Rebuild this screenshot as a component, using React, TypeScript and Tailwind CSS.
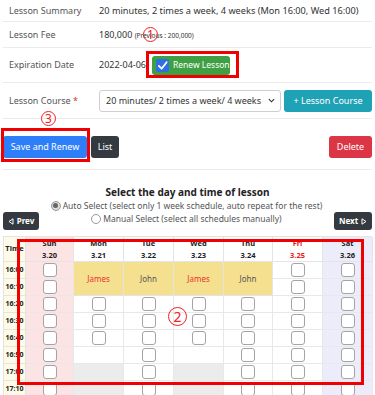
import React from "react";

type Cell =
  | { k: "cb" }
  | { k: "empty" }
  | { k: "grey" }
  | { k: "name"; name: string; red: boolean }
  | { k: "skip" };

const times = ["16:00", "16:10", "16:20", "16:30", "16:40", "16:50", "17:00", "17:10"];
const days = [
  { n: "Sun", d: "3.20", bg: "bg-[#fde4e4]", red: false },
  { n: "Mon", d: "3.21", bg: "bg-white", red: false },
  { n: "Tue", d: "3.22", bg: "bg-white", red: false },
  { n: "Wed", d: "3.23", bg: "bg-white", red: false },
  { n: "Thu", d: "3.24", bg: "bg-white", red: false },
  { n: "Fri", d: "3.25", bg: "bg-white", red: true },
  { n: "Sat", d: "3.26", bg: "bg-[#ececfb]", red: false },
];

const cb: Cell = { k: "cb" };
const em: Cell = { k: "empty" };
const gr: Cell = { k: "grey" };
const sk: Cell = { k: "skip" };
const all = (): Cell[] => times.map(() => cb);
const cols: Cell[][] = [
  all(),
  [{ k: "name", name: "James", red: true }, sk, cb, cb, cb, em, gr, gr],
  [{ k: "name", name: "John", red: false }, sk, cb, cb, cb, cb, cb, cb],
  [{ k: "name", name: "James", red: true }, sk, cb, cb, cb, em, gr, gr],
  [{ k: "name", name: "John", red: false }, sk, cb, cb, cb, cb, cb, cb],
  all(),
  all(),
];

function Box() {
  return <div className="w-[14px] h-[14px] rounded-[3px] border border-[#a4a4a4] bg-white" />;
}

function Circled({ n, cls }: { n: string; cls: string }) {
  return (
    <div
      className={`absolute rounded-full border border-[#f02020] text-[#f02020] flex items-center justify-center leading-none bg-transparent ${cls}`}
    >
      {n}
    </div>
  );
}

export default function App() {
  const gridCells: React.ReactNode[] = [];
  gridCells.push(
    <div key="th" className="bg-[#fdfbe8] border-r border-b border-[#e4e4e4] flex items-center justify-center font-bold text-[7.5px] text-[#222]" style={{ gridColumn: 1, gridRow: 1 }}>
      Time
    </div>
  );
  days.forEach((d, i) => {
    gridCells.push(
      <div
        key={"h" + i}
        className={`${d.bg} border-r border-b border-[#e4e4e4] flex flex-col items-center justify-center font-bold text-[7.5px] leading-[12px] ${d.red ? "text-[#f01818]" : "text-[#222]"}`}
        style={{ gridColumn: i + 2, gridRow: 1 }}
      >
        <span>{d.n}</span>
        <span>{d.d}</span>
      </div>
    );
  });
  times.forEach((t, r) => {
    gridCells.push(
      <div key={"t" + r} className="bg-[#fdfbe8] border-r border-b border-[#e4e4e4] flex items-center justify-center font-bold text-[7px] text-[#222]" style={{ gridColumn: 1, gridRow: r + 2 }}>
        {t}
      </div>
    );
    days.forEach((d, c) => {
      const cell = cols[c][r];
      if (cell.k === "skip") return;
      if (cell.k === "name") {
        gridCells.push(
          <div
            key={`c${c}-${r}`}
            className={`bg-[#f4e08f] border-r border-b border-[#e4e4e4] flex items-center justify-center text-[8px] ${cell.red ? "text-[#f03030]" : "text-[#555]"}`}
            style={{ gridColumn: c + 2, gridRow: `${r + 2} / span 2` }}
          >
            {cell.name}
          </div>
        );
        return;
      }
      const bg = cell.k === "grey" ? "bg-[#ececec]" : d.bg;
      gridCells.push(
        <div key={`c${c}-${r}`} className={`${bg} border-r border-b border-[#e8e8e8] flex items-center justify-center`} style={{ gridColumn: c + 2, gridRow: r + 2 }}>
          {cell.k === "cb" ? <Box /> : null}
        </div>
      );
    });
  });

  return (
    <div className="relative w-[375px] h-[395px] overflow-hidden bg-white font-['Noto_Sans',sans-serif] text-[9px] text-[#333]">
      <div className="px-[3px]">
        <div className="flex items-center h-[22px] border-b border-[#ebebeb]">
          <div className="w-[96px] pl-[6px] text-[#555]">Lesson Summary</div>
          <div className="text-[#333] text-[9.2px]">20 minutes, 2 times a week, 4 weeks (Mon 16:00, Wed 16:00)</div>
        </div>
        <div className="flex items-center h-[26px] border-b border-[#ebebeb]">
          <div className="w-[96px] pl-[6px] text-[#555]">Lesson Fee</div>
          <div className="text-[#333]">
            180,000 <span className="text-[6.5px]">(Previous : 200,000)</span>
          </div>
        </div>
        <div className="flex items-center h-[35px] border-b border-[#ebebeb]">
          <div className="w-[96px] pl-[6px] text-[#555]">Expiration Date</div>
          <div className="text-[#333]">2022-04-06</div>
          <div className="ml-[6px] w-[78px] h-[19px] rounded-[3px] bg-[#3e9f43] flex items-center pl-[4px] gap-[4px] text-white text-[8.5px]">
            <div className="w-[13px] h-[13px] rounded-[2px] bg-[#2f6fe4] flex items-center justify-center">
              <svg width="11" height="11" viewBox="0 0 12 12">
                <path d="M2 6.5 L5 9.5 L10.5 2.5" stroke="white" strokeWidth="2" fill="none" strokeLinecap="round" strokeLinejoin="round" />
              </svg>
            </div>
            <span>Renew Lesson</span>
          </div>
        </div>
        <div className="flex items-center h-[36px] border-b border-[#ebebeb]">
          <div className="w-[96px] pl-[6px] text-[#555]">
            Lesson Course <span className="text-[#e03030]">*</span>
          </div>
          <div className="w-[182px] h-[22px] border border-[#cfcfcf] rounded-[3px] flex items-center justify-between pl-[6px] pr-[5px] text-[9px] text-[#333]">
            <span>20 minutes/ 2 times a week/ 4 weeks</span>
            <svg width="7" height="5" viewBox="0 0 8 5">
              <path d="M1 1 L4 4 L7 1" stroke="#333" strokeWidth="1.3" fill="none" />
            </svg>
          </div>
          <div className="ml-[3px] w-[88px] h-[22px] rounded-[3px] bg-[#1fa2b6] flex items-center justify-center text-white text-[9px]">
            + Lesson Course
          </div>
        </div>
        <div className="flex items-center mt-[17px] pb-[11px] border-b border-[#ebebeb]">
          <div className="w-[84px] h-[22px] rounded-[3px] bg-[#2d7ff9] text-white flex items-center justify-center text-[9px]">Save and Renew</div>
          <div className="ml-[4px] w-[28px] h-[22px] rounded-[3px] bg-[#343a40] text-white flex items-center justify-center text-[9px]">List</div>
          <div className="ml-auto w-[43px] h-[22px] rounded-[3px] bg-[#dc3545] text-white flex items-center justify-center text-[9px]">Delete</div>
        </div>
        <div className="mt-[15px] text-center font-bold text-[10px] text-[#222] leading-[14px]">Select the day and time of lesson</div>
        <div className="flex items-end">
          <div className="w-[36px] h-[18px] rounded-[3px] bg-[#343a40] text-white flex items-center justify-center gap-[3px] text-[8px] font-bold">
            <svg width="6" height="7" viewBox="0 0 6 7"><path d="M5 0.8 L1 3.5 L5 6.2 Z" stroke="white" strokeWidth="1" fill="none" /></svg>
            Prev
          </div>
          <div className="flex-1 flex flex-col items-center text-[8.5px] text-[#555] leading-[13px] pb-[5px]">
            <div className="flex items-center gap-[2px]">
              <div className="w-[10px] h-[10px] rounded-full border border-[#999] bg-[#ddd] flex items-center justify-center">
                <div className="w-[5px] h-[5px] rounded-full bg-[#666]" />
              </div>
              <span>Auto Select (select only 1 week schedule, auto repeat for the rest)</span>
            </div>
            <div className="flex items-center gap-[2px]">
              <div className="w-[10px] h-[10px] rounded-full border border-[#999] bg-white" />
              <span>Manual Select (select all schedules manually)</span>
            </div>
          </div>
          <div className="w-[38px] h-[18px] rounded-[3px] bg-[#343a40] text-white flex items-center justify-center gap-[3px] text-[8px] font-bold">
            Next
            <svg width="6" height="7" viewBox="0 0 6 7"><path d="M1 0.8 L5 3.5 L1 6.2 Z" stroke="white" strokeWidth="1" fill="none" /></svg>
          </div>
        </div>
        <div
          className="mt-[6px] grid border-t border-l border-[#e4e4e4] grid-cols-[22px_48px_50px_50px_50px_49px_50px_50px] grid-rows-[25px_repeat(8,17px)]"
        >
          {gridCells}
        </div>
      </div>

      <div className="absolute left-[146px] top-[51px] w-[93px] h-[27px] border-[3px] border-[#f00000]" />
      <Circled n="1" cls="left-[143px] top-[27px] w-[15px] h-[15px] text-[12px]" />
      <div className="absolute left-[1px] top-[128px] w-[89px] h-[34px] border-[3px] border-[#f00000]" />
      <Circled n="3" cls="left-[41px] top-[111px] w-[15px] h-[15px] text-[12px]" />
      <div className="absolute left-[17px] top-[239px] w-[347px] h-[146px] border-[3px] border-[#f00000]" />
      <Circled n="2" cls="left-[168px] top-[307px] w-[19px] h-[19px] text-[14px]" />
    </div>
  );
}
